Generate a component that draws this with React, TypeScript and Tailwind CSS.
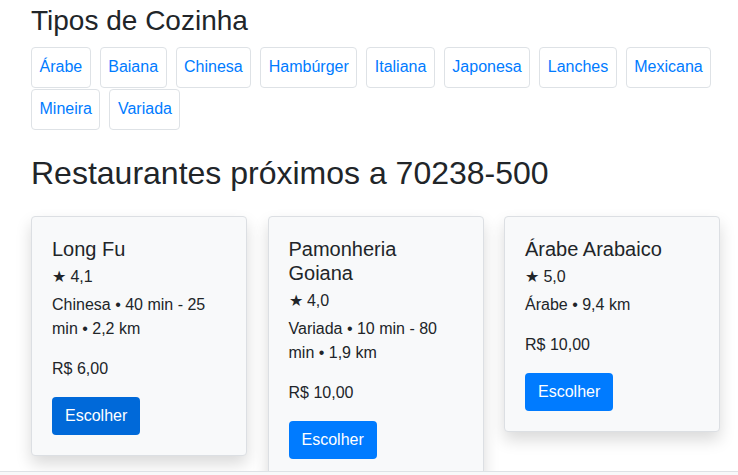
import React from "react";

const tipos = ["Árabe", "Baiana", "Chinesa", "Hambúrger", "Italiana", "Japonesa", "Lanches", "Mexicana", "Mineira", "Variada"];

const restaurantes = [
  { nome: "Long Fu", nota: "4,1", info: "Chinesa • 40 min - 25 min • 2,2 km", frete: "R$ 6,00", ativo: true },
  { nome: "Pamonheria Goiana", nota: "4,0", info: "Variada • 10 min - 80 min • 1,9 km", frete: "R$ 10,00", ativo: false },
  { nome: "Árabe Arabaico", nota: "5,0", info: "Árabe • 9,4 km", frete: "R$ 10,00", ativo: false },
];

export default function App() {
  return (
    <div className="relative h-screen overflow-hidden bg-white text-[#212529] font-['Liberation_Sans',Arial,sans-serif]">
      <div className="pl-[31px] pt-[4px]">
        <h3 className="text-[28px] leading-[1.2] mb-[9px]">Tipos de Cozinha</h3>
        <div className="flex flex-wrap gap-x-[9px] gap-y-px pr-4">
          {tipos.map((t) => (
            <button
              key={t}
              className="h-[41px] px-[7.5px] border border-[#dee2e6] rounded text-[16px] leading-6 text-[#007bff] bg-white"
            >
              {t}
            </button>
          ))}
        </div>

        <h2 className="text-[32px] leading-[1.2] mt-[24px] mb-6">Restaurantes próximos a 70238-500</h2>

        <div className="flex items-start gap-[20.5px]">
          {restaurantes.map((r) => (
            <div
              key={r.nome}
              className="w-[216px] bg-[#f8f9fa] border border-[#dcdfe3] rounded p-5 shadow-[0_8px_16px_rgba(0,0,0,0.15)]"
            >
              <h5 className="text-[20px] leading-[1.2] mb-1">{r.nome}</h5>
              <p className="text-[16px] leading-6 mb-1">★ {r.nota}</p>
              <p className="text-[16px] leading-6 mb-4">{r.info}</p>
              <p className="text-[16px] leading-6 mb-4">{r.frete}</p>
              <button
                className={
                  r.ativo
                    ? "h-[38px] px-[13px] rounded text-[16px] text-white bg-[#0069d9]"
                    : "h-[38px] px-[13px] rounded text-[16px] text-white bg-[#007bff]"
                }
              >
                Escolher
              </button>
            </div>
          ))}
        </div>
      </div>

      <div className="absolute left-0 right-0 top-[471px] h-10 bg-[#f8f9fa] border-t border-[#dee2e6]"></div>
    </div>
  );
}
